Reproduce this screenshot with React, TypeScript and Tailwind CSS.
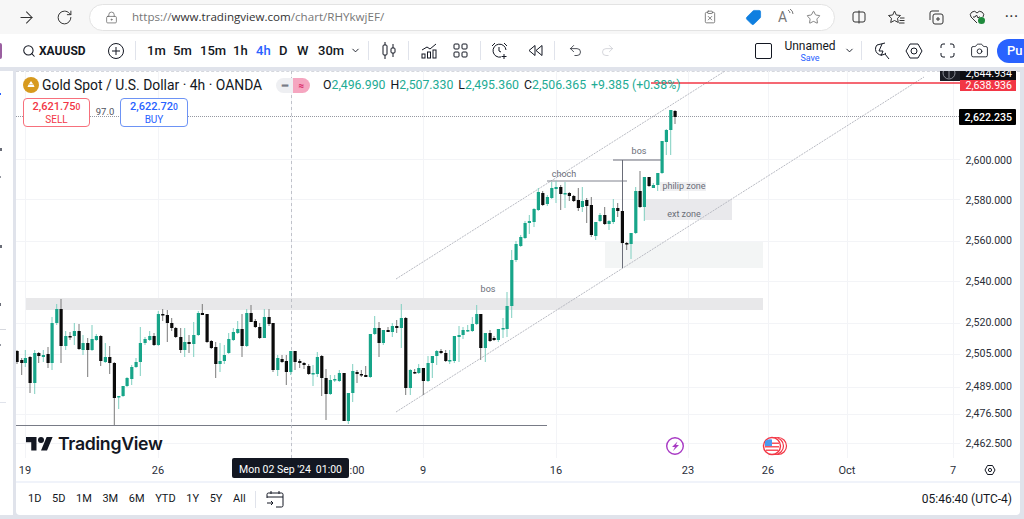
import { ArrowRight, RotateCw, LockKeyhole, Star, Search, ChevronDown, Undo2, Redo2, Camera, ClipboardX, Tag } from "lucide-react";

// x, wick top, wick bottom, body top, body bottom, up?
type Candle = [number, number, number, number, number, number];

const candles: Candle[] = [
  [17,350,364,351,362,0],[21.7,358,375,360,363,0],[25.3,350,367,358,363,1],[30,356,393,357,383,0],[34.7,350,394,353,383,1],
  [38.7,352,363,353,356,0],[43.3,350,362,355,357,1],[48,347,368,354,363,0],[52,317,370,323,363,1],[56.7,304,325,309,323,1],
  [61,299,363,309,346,0],[65.7,331,350,336,346,1],[70,332,340,336,337,0],[74.3,323,345,331,336,1],[79,324,350,331,349,0],
  [83,335,355,343,350,1],[87.7,338,377,343,350,0],[92,325,351,339,350,1],[96.3,334,341,336,340,1],[100.7,335,366,336,361,0],
  [105.3,343,363,357,362,1],[109.7,346,374,357,363,0],[114.3,362,425,363,398,0],[118.7,396,409,396,397,1],[123,386,397,386,396,1],
  [127,377,387,378,386,1],[131.7,365,385,367,379,1],[136,358,368,362,367,1],[140.3,327,376,343,362,1],[145,337,345,339,343,1],
  [149.7,331,341,336,340,1],[154,333,346,336,345,0],[158.3,311,346,314,345,1],[162.7,309,321,314,315,0],[167.3,310,342,315,323,0],
  [171.7,318,331,323,328,0],[175.7,327,338,328,337,0],[180.7,328,353,337,350,0],[184.7,328,357,342,350,1],[189,335,353,342,344,0],
  [193.7,322,357,335,344,1],[198.3,311,336,313,335,1],[202.3,304,315,313,315,0],[207,314,343,314,342,0],[211.3,340,349,341,348,0],
  [215.7,342,378,347,364,0],[220,343,372,361,364,1],[224.3,345,364,355,361,1],[228.7,333,354,339,353,1],[233.3,328,341,332,340,1],
  [237.7,321,334,329,333,1],[242,314,357,329,346,0],[246.7,309,347,313,346,1],[251,305,322,313,322,0],[255.3,319,328,321,327,0],
  [259.7,323,339,327,338,0],[264.3,309,338,317,338,1],[269,309,326,317,324,0],[273,323,372,323,370,0],[277.7,355,376,358,370,1],
  [282,355,363,359,362,0],[286.3,355,385,361,372,0],[290.7,351,375,351,372,1],[295,351,370,351,362,0],[299.7,359,368,361,363,0],
  [304,362,369,363,365,0],[308.7,364,375,366,374,0],[313,365,386,373,374,1],[317.3,352,377,357,374,1],[321.7,355,396,356,378,0],
  [326,369,420,378,394,0],[330.3,375,395,380,394,1],[334.7,375,382,379,380,1],[339.3,370,382,373,381,1],[344,373,421,373,421,0],
  [348.3,393,424,393,421,1],[352.7,364,402,371,393,1],[357,370,383,372,374,0],[361.3,370,377,374,375,0],[365.7,366,377,375,377,0],
  [370.3,334,378,334,377,1],[374.7,316,335,328,334,1],[379,322,357,328,343,0],[383.3,330,345,330,343,1],[388,327,332,330,332,0],
  [392.3,323,337,326,332,1],[396.7,320,333,326,328,0],[401.3,304,348,318,328,1],[405.7,317,395,318,388,0],[410.3,369,395,370,388,1],
  [414.7,369,374,372,373,0],[418.7,364,374,368,373,1],[423.3,368,395,368,381,0],[428,356,382,363,381,1],[432.3,356,378,356,363,1],
  [436.7,350,365,351,356,1],[441,349,354,351,353,0],[445.7,350,362,353,361,0],[449.7,350,364,360,361,1],[454.3,336,363,336,361,1],
  [459,326,362,335,337,1],[463,327,339,330,335,1],[467.7,325,332,330,331,1],[472.3,317,332,324,331,1],[476.7,305,325,314,324,1],
  [480.7,314,360,314,348,0],[485.3,333,362,333,348,1],[490,330,342,333,341,0],[494,336,341,338,340,0],[498.3,329,342,329,340,1],
  [503,318,338,328,329,1],[507,292,337,306,329,1],[511.7,250,318,260,306,1],[516,241,262,244,260,1],[520.7,235,247,237,246,1],
  [525,221,239,223,238,1],[529.3,215,234,221,223,1],[534,208,227,209,222,1],[538.3,188,211,192,210,1],[542.7,191,206,193,205,0],
  [547.3,195,206,197,204,1],[551.7,182,199,188,198,1],[556,181,203,187,189,1],[560.7,185,210,187,194,0],[565,182,208,193,194,1],
  [569.3,192,201,193,196,0],[573.7,195,202,196,201,0],[578.3,188,211,200,208,0],[582.3,187,212,201,207,1],[586.7,198,223,200,206,0],
  [591.3,197,237,205,235,0],[595.7,222,240,222,236,1],[600,213,222,215,221,1],[604.7,207,225,215,224,0],[609,220,230,221,224,1],
  [613.3,199,224,208,222,1],[617.7,203,217,208,211,0],[622.3,211,244,211,243,0],[626.7,242,250,243,244,0],[631,233,259,233,244,1],
  [635.7,187,234,191,233,1],[640,171,208,191,207,0],[644.3,177,221,177,207,1],[649,177,187,177,186,0],[653.3,183,188,185,188,1],
  [657.7,173,191,173,185,1],[662,141,174,141,173,1],[666.3,129,155,130,142,1],[670.7,110,155,110,130,1],[675,110,124,111,117,0],
];

const gridY = [159, 199, 241, 281, 323, 354, 387, 414, 443];
const gridX = [25, 158, 291, 423, 556, 688, 768, 847, 953];

const prices: [string, number][] = [
  ["2,600.000", 160], ["2,580.000", 200], ["2,560.000", 240], ["2,540.000", 281], ["2,520.000", 322],
  ["2,505.000", 353], ["2,489.000", 386], ["2,476.500", 413], ["2,462.500", 443],
];

const times: [string, number][] = [
  ["19", 25], ["26", 158], [":00", 357], ["9", 423], ["16", 556], ["23", 688], ["26", 768], ["Oct", 847], ["7", 953],
];

const intervals: [string, string][] = [
  ["1m", "w-[15px] mr-[11px]"], ["5m", "w-[16px] mr-[11px]"], ["15m", "w-[22px] mr-[11px]"], ["1h", "w-[12px] mr-[11px]"],
  ["4h", "w-[12px] mr-[11px] text-[#2962ff]"], ["D", "w-[7px] mr-[11px]"], ["W", "w-[10px] mr-[11px]"], ["30m", "w-[22px] mr-[8px]"],
];

const ranges = ["1D", "5D", "1M", "3M", "6M", "YTD", "1Y", "5Y", "All"];

function ChartDrawing() {
  return (
    <svg viewBox="16 71 1004 410" className="block h-[410px] w-[1004px]" style={{ fontFamily: "Roboto, sans-serif" }}>
      {gridX.map((x) => <line key={x} x1={x + 0.5} x2={x + 0.5} y1={71} y2={458} stroke="#f3f4f7" />)}
      {gridY.map((y) => <line key={y} x1={16} x2={960} y1={y + 0.5} y2={y + 0.5} stroke="#f3f4f7" />)}

      <rect x={26} y={298} width={737} height={12} fill="#e8e8ea" />
      <rect x={644} y={199} width={88} height={21} fill="#e9e9ec" />
      <rect x={605} y={242} width={158} height={26} fill="#f3f5f5" />
      <rect x={660} y={182} width={46} height={9} fill="#efeff1" />

      <line x1={396} y1={279} x2={725} y2={71} stroke="#b8bac2" strokeDasharray="2 1" />
      <line x1={396} y1={412} x2={924} y2={77} stroke="#b8bac2" strokeDasharray="2 1" />

      <line x1={16} x2={547} y1={425.5} y2={425.5} stroke="#787b86" strokeWidth={1.2} />
      <line x1={547} x2={627} y1={181} y2={181} stroke="#80838e" />
      <line x1={613} x2={662} y1={160} y2={160} stroke="#6a6d78" />
      <line x1={622.5} x2={622.5} y1={160} y2={268} stroke="#6a6d78" />

      <line x1={16} x2={960} y1={116.5} y2={116.5} stroke="#9598a1" strokeDasharray="1 1" />
      <line x1={291.5} x2={291.5} y1={71} y2={458} stroke="#b2b5be" strokeDasharray="3 3" strokeWidth={0.8} />

      {candles.map(([x, wt, wb, bt, bb, up]) => (
        <g key={x}>
          <line x1={x} x2={x} y1={wt} y2={wb} stroke={up ? "#7fcfc0" : "#7a7a7a"} />
          <rect x={x - 1.5} y={bt} width={3.2} height={Math.max(bb - bt, 1.5)} fill={up ? "#17a589" : "#0b0b0b"} />
        </g>
      ))}

      <text x={488} y={292} textAnchor="middle" fontSize={9} fill="#6a6d78">bos</text>
      <text x={639} y={154} textAnchor="middle" fontSize={9} fill="#6a6d78">bos</text>
      <text x={564} y={177} textAnchor="middle" fontSize={9} fill="#6a6d78">choch</text>
      <text x={684} y={189} textAnchor="middle" fontSize={9} fill="#6a6d78">philip zone</text>
      <text x={684} y={217} textAnchor="middle" fontSize={9} fill="#6a6d78">ext zone</text>

      <line x1={651} x2={960} y1={83} y2={83} stroke="#f23645" strokeWidth={1.4} />

      <rect x={940} y={71} width={20} height={10} fill="#1a1c24" />
      <circle cx={949} cy={73} r={6} fill="none" stroke="#8a8d96" />
      <line x1={949} x2={949} y1={71} y2={78} stroke="#8a8d96" />
      <rect x={960} y={71} width={56} height={9} fill="#0c0c10" />
      <text x={1012} y={77} textAnchor="end" fontSize={10.6} fill="#ffffff">2,644.934</text>
      <rect x={960} y={80} width={56} height={11} fill="#f23645" />
      <text x={1012} y={89} textAnchor="end" fontSize={10.6} fill="#ffffff">2,638.936</text>
      <rect x={959} y={109} width={57} height={16} rx={1} fill="#000000" />
      <text x={1012} y={121} textAnchor="end" fontSize={10.6} fontWeight={500} fill="#ffffff">2,622.235</text>

      {prices.map(([p, y]) => (
        <text key={p} x={1012} y={y + 4} textAnchor="end" fontSize={10.6} fill="#2a2e39">{p}</text>
      ))}

      <circle cx={675} cy={446} r={8.3} fill="#ffffff" stroke="#a83ac4" strokeWidth={1.4} />
      <path d="M677.5 441.5 L672 447 H675 L673 451 L679 445 H676 Z" fill="#a83ac4" />

      <circle cx={778} cy={446} r={8.5} fill="#ffffff" stroke="#f23645" strokeWidth={1.2} />
      <circle cx={775} cy={446} r={8.5} fill="#ffffff" stroke="#f23645" strokeWidth={1.2} />
      <circle cx={772} cy={446} r={8.5} fill="#ffffff" stroke="#f23645" strokeWidth={1.4} />
      <rect x={765} y={442.5} width={14} height={1.5} fill="#f7525f" />
      <rect x={765} y={446} width={14} height={1.5} fill="#f7525f" />
      <rect x={766} y={449.5} width={12} height={1.5} fill="#f7525f" />
      <path d="M765 446 V441 A8 8 0 0 1 772 439.5 V446 Z" fill="#4a9bf0" />

      <rect x={16} y={458} width={1004} height={23} fill="#ffffff" />
      {times.map(([t, x]) => (
        <text key={t + x} x={x} y={474} textAnchor="middle" fontSize={11} fill="#2a2e39">{t}</text>
      ))}
      <rect x={232} y={458} width={117} height={20} rx={2} fill="#131722" />
      <text x={239} y={473} fontSize={10.5} fill="#ffffff">Mon 02 Sep '24</text>
      <text x={342} y={473} textAnchor="end" fontSize={10.5} fill="#ffffff">01:00</text>
      <path d="M985 470 L987.5 465.5 H992.5 L995 470 L992.5 474.5 H987.5 Z" fill="none" stroke="#131722" />
      <circle cx={990} cy={470} r={1.6} fill="none" stroke="#131722" />
    </svg>
  );
}

export default function App() {
  return (
    <div className="flex h-[519px] w-[1024px] flex-col overflow-hidden bg-[#e0e3eb] font-['Roboto',sans-serif] text-[#131722]">
      {/* browser bar */}
      <div className="flex h-[34px] items-center bg-[#f7f7f7]">
        <ArrowRight size={19} strokeWidth={1.3} className="ml-[17px] text-[#333]" />
        <RotateCw size={17} strokeWidth={1.4} className="ml-[20px] text-[#333]" />
        <div className="ml-[16px] flex h-[27px] w-[746px] items-center rounded-full border border-[#e3e3e3] bg-white">
          <LockKeyhole size={13} strokeWidth={1.4} className="ml-[15px] text-[#666]" />
          <span className="ml-[14px] font-['Open_Sans',sans-serif] text-[11.6px] text-[#777]">
            https://<span className="text-[#333]">www.tradingview.com</span>/chart/RHYkwjEF/
          </span>
          <ClipboardX size={14} strokeWidth={1.4} className="ml-auto text-[#666]" />
          <Tag size={17} fill="#0f7fe0" strokeWidth={1} className="ml-[28px] rotate-90 text-[#0f7fe0]" />
          <span className="ml-[16px] flex w-[19px] items-start text-[14px] text-[#777]">
            A
            <svg width="7" height="9" viewBox="0 0 7 9" fill="none" stroke="#777" className="mt-[2px]"><path d="M1 1a4 4 0 0 1 2 3M3 0a6 6 0 0 1 3 5" /></svg>
          </span>
          <Star size={15} strokeWidth={1.3} className="ml-[9px] mr-[13px] text-[#666]" />
        </div>
        <svg width="14" height="14" viewBox="0 0 14 14" fill="none" stroke="#333" className="ml-[17px]"><rect x="1" y="2" width="12" height="10" rx="2" /><path d="M7 0.5V13.5" /></svg>
        <svg width="17" height="15" viewBox="0 0 17 15" fill="none" stroke="#333" className="ml-[22px]"><path d="M6.500 1l1.800 4 4.200.5-3 2.800.8 4.200-3.800-2-3.800 2 .8-4.200-3-2.800 4.200-.5zM12 8h4.500M11.500 10.500h5M11 13h5.500" /></svg>
        <svg width="15" height="15" viewBox="0 0 15 15" fill="none" stroke="#333" className="ml-[24px]"><rect x="4" y="4" width="10" height="10" rx="2" /><path d="M1 10V3a2 2 0 0 1 2-2h7M9 7v4M7 9h4" /></svg>
        <svg width="17" height="16" viewBox="0 0 17 16" fill="none" stroke="#333" className="ml-[25px]"><path d="M8 14L2 8a3.500 3.500 0 0 1 6-4 3.500 3.500 0 0 1 6 4M4 8h2l1.500-2 1.500 3 1-1h1" /><circle cx="12.500" cy="11.500" r="3.500" fill="#1f8a3c" stroke="none" /></svg>
        <span className="ml-[19px] text-[12px] font-bold tracking-[1px] text-[#333]">···</span>
      </div>

      {/* chart toolbar */}
      <div className="flex h-[33px] items-center bg-white text-[13px] font-medium">
        <div className="h-[16px] w-[2px] rounded-r-full bg-[#9a5fa0]" />
        <Search size={14} strokeWidth={1.8} className="ml-[20px]" />
        <span className="ml-[3px] w-[45px] text-[12px] font-bold">XAUUSD</span>
        <svg width="16" height="16" viewBox="0 0 16 16" fill="none" stroke="#131722" className="ml-[24px]"><circle cx="8" cy="8" r="7.500" /><path d="M8 4v8M4 8h8" /></svg>
        <div className="mx-[11px] h-[19px] w-px bg-[#e0e3eb]" />
        {intervals.map(([label, cls]) => (
          <span key={label} className={cls}>{label}</span>
        ))}
        <ChevronDown size={11} className="ml-[2px]" />
        <div className="ml-[7px] h-[19px] w-px bg-[#e0e3eb]" />
        <svg width="14" height="17" viewBox="0 0 14 17" fill="none" stroke="#131722" className="ml-[13px]"><rect x="1" y="3" width="4" height="10" rx="1" /><path d="M3 0v3M3 13v4M11 2v4M11 11v4" /><rect x="9" y="6" width="4" height="5" rx="1" /></svg>
        <div className="ml-[12px] h-[19px] w-px bg-[#e0e3eb]" />
        <svg width="16" height="16" viewBox="0 0 16 16" fill="none" stroke="#131722" className="ml-[12px]"><path d="M1 7l5-3 3 2 6-5" /><rect x="1" y="11" width="3" height="4" /><rect x="6.500" y="9" width="3" height="6" /><rect x="12" y="7" width="3" height="8" /></svg>
        <svg width="15" height="15" viewBox="0 0 15 15" fill="none" stroke="#131722" className="ml-[16px]"><rect x="1" y="1" width="5" height="5" rx="1" /><rect x="9" y="1" width="5" height="5" rx="1" /><rect x="1" y="9" width="5" height="5" rx="1" /><rect x="9" y="9" width="5" height="5" rx="1" /></svg>
        <div className="ml-[12px] h-[19px] w-px bg-[#e0e3eb]" />
        <svg width="18" height="18" viewBox="0 0 18 18" fill="none" stroke="#131722" className="ml-[10px]"><path d="M15 8a6.500 6.500 0 1 0-5 7M8 5v4l2 1M13 12v5M10.500 14.500h5M1 4l3-3M13 1l3 3" /></svg>
        <svg width="15" height="13" viewBox="0 0 15 13" fill="none" stroke="#131722" className="ml-[19px]"><path d="M7 1.500L1 6.500l6 5zM14 1.500L8 6.500l6 5z" /></svg>
        <div className="ml-[11px] h-[19px] w-px bg-[#e0e3eb]" />
        <Undo2 size={15} strokeWidth={1.2} className="ml-[13px]" />
        <Redo2 size={15} strokeWidth={1.2} className="ml-[17px] text-[#c8cad0]" />
        <div className="ml-[140px] h-[16px] w-[17px] rounded-[2px] border border-[#131722]" />
        <div className="ml-[12px] flex w-[52px] flex-col items-center">
          <span className="text-[12px] font-normal leading-[14px]">Unnamed</span>
          <span className="text-[9px] font-normal leading-[10px] text-[#2962ff]">Save</span>
        </div>
        <ChevronDown size={11} className="ml-[8px]" />
        <div className="ml-[6px] h-[19px] w-px bg-[#e0e3eb]" />
        <svg width="17" height="18" viewBox="0 0 17 18" fill="none" stroke="#131722" className="ml-[11px]"><path d="M12 1L4 3a6 6 0 1 0 9 8M12 12l4 5M9 2L6 9h4l-2 5" /></svg>
        <svg width="18" height="16" viewBox="0 0 18 16" fill="none" stroke="#131722" className="ml-[15px]"><path d="M1 8l4-7h8l4 7-4 7H5z" /><circle cx="9" cy="8" r="3" /></svg>
        <svg width="15" height="15" viewBox="0 0 15 15" fill="none" stroke="#131722" className="ml-[17px]"><path d="M1 5V3a2 2 0 0 1 2-2h2M10 1h2a2 2 0 0 1 2 2v2M14 10v2a2 2 0 0 1-2 2h-2M5 14H3a2 2 0 0 1-2-2v-2" /></svg>
        <Camera size={19} strokeWidth={1.1} className="ml-[15px]" />
        <div className="ml-[8px] flex h-[24px] flex-1 items-center rounded-l-full bg-[#2962ff] pl-[10px] text-[13px] text-white">Pu</div>
      </div>

      {/* workspace */}
      <div className="flex flex-1 pb-[4px] pt-[4px]">
        <div className="w-[13px] bg-white">
          <svg width="13" height="444" viewBox="0 71 13 444" className="block">
            <rect x={0} y={93} width={1} height={2} fill="#2962ff" />
            <rect x={0} y={148} width={2} height={3} fill="#6a6d78" />
            <rect x={0} y={176} width={1} height={2} fill="#9598a1" />
            <rect x={0} y={245} width={2} height={3} fill="#6a6d78" />
            <rect x={0} y={303} width={1} height={3} fill="#6a6d78" />
            <rect x={0} y={329} width={6} height={1} fill="#d6d8de" />
            <rect x={0} y={344} width={1} height={2} fill="#9598a1" />
            <rect x={0} y={402} width={6} height={1} fill="#e0e3eb" />
          </svg>
        </div>
        <div className="ml-[3px] mr-[4px] flex w-[1004px] flex-col overflow-hidden rounded-b-[4px] bg-white">
          <div className="relative h-[410px] border-t border-dashed border-[#d6d8de]">
            <div className="-mt-px"><ChartDrawing /></div>

            {/* legend */}
            <div className="absolute left-[7px] top-[4px]">
              <div className="flex h-[18px] items-center">
                <svg width="16" height="16" viewBox="0 0 16 16">
                  <circle cx="8" cy="8" r="8" fill="#d79a1e" />
                  <path d="M5.500 7.500h5l1 2.500h-7zM6 7l2-3 2 3z" fill="#ffffff" />
                </svg>
                <span className="ml-[3px] w-[221px] whitespace-nowrap text-[13.9px] text-[#131722]">Gold Spot / U.S. Dollar · 4h · OANDA</span>
                <div className="ml-[13px] flex h-[15px] w-[34px] overflow-hidden rounded-full text-[10px] font-bold">
                  <span className="flex w-[17px] items-center justify-center bg-[#eeeff2] text-[#787b86]">━</span>
                  <span className="flex w-[17px] items-center justify-center bg-[#f5a6c0] text-[#d81b60]">≈</span>
                </div>
                <span className="ml-[13px] flex gap-[5px] whitespace-nowrap text-[12.3px] text-[#22ab94]">
                  <span><span className="text-[#131722]">O</span>2,496.990</span>
                  <span><span className="text-[#131722]">H</span>2,507.330</span>
                  <span><span className="text-[#131722]">L</span>2,495.360</span>
                  <span><span className="text-[#131722]">C</span>2,506.365</span>
                  <span>+9.385 (+0.38%)</span>
                </span>
              </div>
              <div className="mt-[4px] flex items-center">
                <div className="flex h-[29px] w-[67px] flex-col items-center justify-center rounded-[4px] border border-[#f7707c] bg-white text-[#f23645]">
                  <span className="text-[11px] font-medium leading-[14px]">2,621.75<span className="text-[8.5px]">0</span></span>
                  <span className="text-[10px] leading-[12px]">SELL</span>
                </div>
                <span className="w-[30px] text-center text-[9.5px] text-[#50535e]">97.0</span>
                <div className="flex h-[29px] w-[68px] flex-col items-center justify-center rounded-[4px] border border-[#6d93f5] bg-white text-[#2962ff]">
                  <span className="text-[11px] font-medium leading-[14px]">2,622.72<span className="text-[8.5px]">0</span></span>
                  <span className="text-[10px] leading-[12px]">BUY</span>
                </div>
              </div>
            </div>

            {/* watermark */}
            <div className="absolute left-[10px] top-[359px] flex items-center">
              <svg width="27" height="21" viewBox="0 0 36 28" fill="#131722">
                <path d="M14 22H7V11H0V4h14v18zM28 22h-8l7.500-18h8L28 22z" />
                <circle cx="20" cy="8" r="4" />
              </svg>
              <span className="ml-[5px] font-['Inter',sans-serif] text-[17.7px] font-semibold tracking-[-0.3px] text-[#131722]">TradingView</span>
            </div>
          </div>

          <div className="h-[2px] bg-[#f0f3fa]" />

          {/* range bar */}
          <div className="flex flex-1 items-center text-[11px] text-[#131722]">
            <div className="ml-[12px] flex gap-[10.6px]">
              {ranges.map((r) => <span key={r}>{r}</span>)}
            </div>
            <div className="ml-[9px] h-[17px] w-px bg-[#e0e3eb]" />
            <svg width="18" height="17" viewBox="0 0 18 17" fill="none" stroke="#131722" className="ml-[10px]">
              <path d="M1 7V3.500A1.500 1.500 0 0 1 2.500 2h13A1.500 1.500 0 0 1 17 3.500v11a1.500 1.500 0 0 1-1.500 1.500H10M1 6h16M5 0v3M13 0v3M1 12h6M5 10l2 2-2 2" />
            </svg>
            <span className="ml-auto mr-[8px] text-[12px]">05:46:40 (UTC-4)</span>
          </div>
        </div>
      </div>
    </div>
  );
}
